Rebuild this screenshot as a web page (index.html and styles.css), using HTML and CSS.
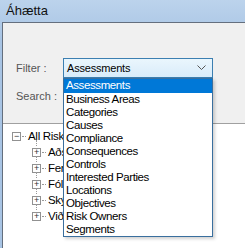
FILE: index.html
```html
<!DOCTYPE html>
<html lang="is">
<head>
    <meta charset="UTF-8">
    <title>Áhætta</title>
    <link rel="stylesheet" href="styles.css">
</head>
<body>
    <div class="window">
        <div class="titlebar">Áhætta</div>
        <div class="panel">
            <div class="filters">
                <div class="row">
                    <span class="label">Filter :</span>
                    <div class="combo">
                        <div class="combo-box">
                            <span>Assessments</span>
                            <svg class="chevron" width="9" height="6" viewBox="0 0 9 6"><path d="M0.5 0.5 L4.5 4.5 L8.5 0.5" fill="none" stroke="#555" stroke-width="1"/></svg>
                        </div>
                        <ul class="combo-list">
                            <li class="selected">Assessments</li>
                            <li>Business Areas</li>
                            <li>Categories</li>
                            <li>Causes</li>
                            <li>Compliance</li>
                            <li>Consequences</li>
                            <li>Controls</li>
                            <li>Interested Parties</li>
                            <li>Locations</li>
                            <li>Objectives</li>
                            <li>Risk Owners</li>
                            <li>Segments</li>
                        </ul>
                    </div>
                </div>
                <div class="row">
                    <span class="label">Search :</span>
                </div>
            </div>
            <div class="tree">
                <div class="node root">
                    <span class="box">&minus;</span><span class="dots"></span><span class="text">All Risks</span>
                </div>
                <div class="children">
                    <div class="node"><span class="box">+</span><span class="dots"></span><span class="text">Aðstaða</span></div>
                    <div class="node"><span class="box">+</span><span class="dots"></span><span class="text">Ferlar</span></div>
                    <div class="node"><span class="box">+</span><span class="dots"></span><span class="text">Fólk</span></div>
                    <div class="node"><span class="box">+</span><span class="dots"></span><span class="text">Ský</span></div>
                    <div class="node"><span class="box">+</span><span class="dots"></span><span class="text">Viðskipti</span></div>
                </div>
            </div>
        </div>
    </div>
</body>
</html>
```

FILE: styles.css
```css
* {
    margin: 0;
    padding: 0;
    box-sizing: border-box;
}
html, body {
    width: 100%;
    height: 100%;
    overflow: hidden;
}
body {
    font-family: "Liberation Sans", Arial, sans-serif;
    font-size: 11px;
    color: #000;
    background: #b4cce8;
}
.window {
    height: 100%;
    display: flex;
    flex-direction: column;
    padding-left: 2px;
    background: linear-gradient(to bottom, #bcd3ec, #a8c4e4 40px, #a8c4e4);
}
.titlebar {
    height: 22px;
    padding-left: 4px;
    line-height: 22px;
    font-size: 13px;
    color: #111;
}
.panel {
    flex: 1;
    display: flex;
    flex-direction: column;
    border-top: 1px solid #646f7e;
    border-left: 1px solid #646f7e;
    background: #f0f0f0;
}
.filters {
    height: 100px;
    padding: 35px 0 0 13px;
    display: flex;
    flex-direction: column;
    gap: 8px;
}
.row {
    display: flex;
    align-items: center;
    height: 20px;
}
.label {
    width: 47px;
    color: #555;
    font-size: 11px;
}
.combo {
    position: relative;
    width: 150px;
}
.combo-box {
    height: 20px;
    display: flex;
    align-items: center;
    justify-content: space-between;
    padding: 0 6px 0 3px;
    border: 1px solid #3c7fb1;
    background: linear-gradient(to bottom, #eaf6fd, #d9ecfa);
    letter-spacing: -0.2px;
}
.chevron {
    display: block;
}
.combo-list {
    position: absolute;
    top: 20px;
    left: 0;
    width: 150px;
    list-style: none;
    background: #fff;
    border: 1px solid #3a6f9e;
    box-shadow: 2px 2px 3px rgba(0, 0, 0, 0.18);
    z-index: 2;
}
.combo-list li {
    height: 13px;
    line-height: 13px;
    padding-left: 2px;
    font-size: 11.5px;
    letter-spacing: -0.4px;
    white-space: nowrap;
}
.combo-list li:first-child {
    height: 14px;
}
.combo-list li.selected {
    background: #0078d7;
    color: #fff;
}
.tree {
    flex: 1;
    border-top: 1px solid #a0a0a0;
    background: #fff;
    padding: 4px 0 0 9px;
}
.node {
    height: 16px;
    display: flex;
    align-items: center;
    font-size: 11.5px;
    letter-spacing: -0.3px;
}
.box {
    width: 9px;
    height: 9px;
    border: 1px solid #919191;
    display: flex;
    align-items: center;
    justify-content: center;
    font-size: 9px;
    line-height: 1;
    color: #333;
    background: #fff;
}
.dots {
    width: 4px;
    height: 1px;
    margin: 0 2px 0 1px;
    border-top: 1px dotted #999;
}
.children {
    margin-left: 11px;
    padding-left: 9px;
    position: relative;
}
.children .node {
    position: relative;
}
.children .node::before {
    content: "";
    position: absolute;
    left: 4px;
    top: -4px;
    height: 6px;
    border-left: 1px dotted #999;
}
```
